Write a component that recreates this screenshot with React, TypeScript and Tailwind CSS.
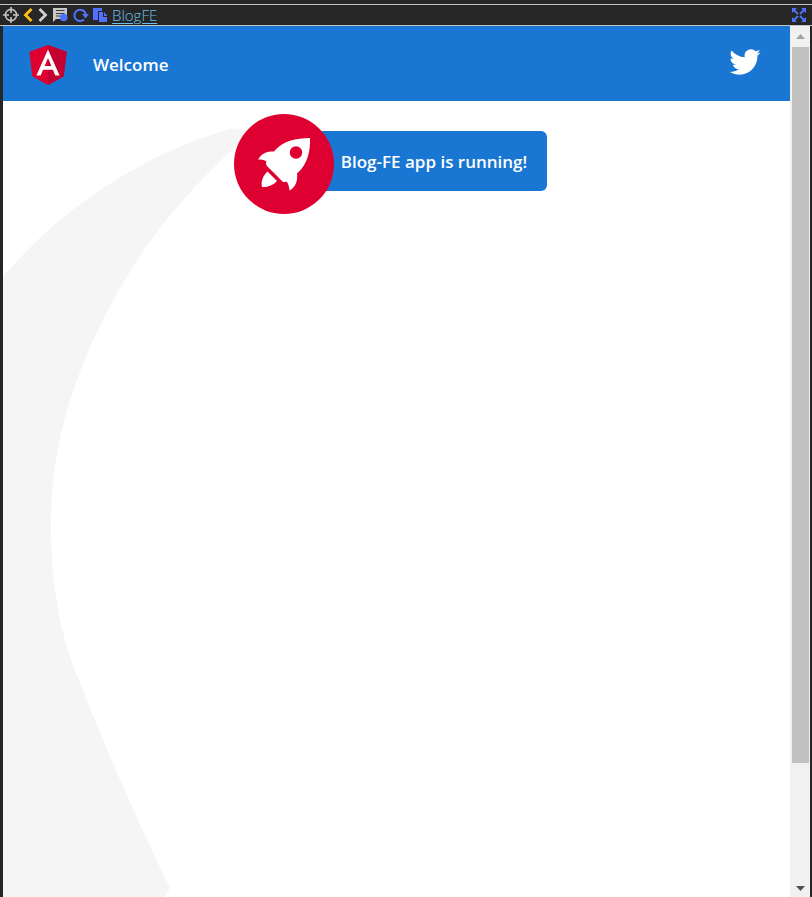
import type { ReactNode } from "react";

function ToolButton({ label, className, children }: { label: string; className: string; children: ReactNode }) {
  return (
    <button type="button" aria-label={label} className={`flex h-4 shrink-0 items-center justify-center ${className}`}>
      {children}
    </button>
  );
}

function BrowserBar() {
  return (
    <div className="mt-1 flex h-[22px] shrink-0 items-center gap-1 border-y border-[#c4c4c4] pr-[5px] pl-[3px]">
      <ToolButton label="Locate" className="w-4 text-[#c4c4c4]">
        <svg viewBox="0 0 16 16" className="size-4" fill="none" stroke="currentColor" strokeWidth="1.6">
          <circle cx="8" cy="8" r="5.6" />
          <path d="M8 0v6M8 10v6M0 8h6M10 8h6" />
        </svg>
      </ToolButton>
      <ToolButton label="Back" className="w-[11px] text-[#ffc20e]">
        <svg viewBox="0 0 11 16" className="h-4 w-[11px]" fill="none" stroke="currentColor" strokeWidth="2.8">
          <path d="M8.500 2L2.500 8l6 6" />
        </svg>
      </ToolButton>
      <ToolButton label="Forward" className="w-[11px] text-[#d0d0d0]">
        <svg viewBox="0 0 11 16" className="h-4 w-[11px]" fill="none" stroke="currentColor" strokeWidth="2.8">
          <path d="M1.500 2l6 6-6 6" />
        </svg>
      </ToolButton>
      <ToolButton label="Comments" className="w-4">
        <svg viewBox="0 0 16 16" className="size-4">
          <path d="M0 1h14v11H3l-3 3z" fill="#c8c8c8" />
          <path d="M3 3.500h8.500M3 6.500h8.500M3 9h5" stroke="#3a3a3a" strokeWidth="1" />
          <circle cx="10.700" cy="10.500" r="3.800" fill="#5271ff" />
        </svg>
      </ToolButton>
      <ToolButton label="Reload" className="w-4 text-[#5271ff]">
        <svg viewBox="0 0 16 16" className="size-4">
          <path d="M11 12.600A5.700 5.700 0 1 1 12.700 7" fill="none" stroke="currentColor" strokeWidth="2" />
          <path d="M9 7h7l-3.500 4.500z" fill="currentColor" />
        </svg>
      </ToolButton>
      <ToolButton label="Copy address" className="w-[15px]">
        <svg viewBox="0 0 15 16" className="h-4 w-[15px]" fill="#5271ff">
          <path d="M0 1h9v3H5v9H0z" />
          <path d="M6 5h4v5h4v5H6z" />
          <path d="M11 5l3.500 4H11z" />
        </svg>
      </ToolButton>
      <a
        href="#blog"
        className="font-['Open_Sans','Noto_Sans',sans-serif] text-[15px] leading-5 font-light text-[#6cc0ee] underline underline-offset-2"
      >
        BlogFE
      </a>
      <ToolButton label="Full screen" className="ml-auto w-4 text-[#5271ff]">
        <svg viewBox="0 0 16 16" className="size-4">
          <path
            d="M1 1h5L1 6zM15 1v5L10 1zM1 15v-5l5 5zM15 15h-5l5-5z"
            fill="currentColor"
          />
          <path d="M3 3l4 4M13 3L9 7M3 13l4-4M13 13L9 9" stroke="currentColor" strokeWidth="1.800" />
        </svg>
      </ToolButton>
    </div>
  );
}

function AngularLogo() {
  return (
    <svg viewBox="0 0 250 250" className="size-[50px]" role="img" aria-label="Angular">
      <path fill="#dd0031" d="M125 30L31.9 63.2l14.2 123.1L125 230l78.9-43.7 14.2-123.1z" />
      <path fill="#c3002f" d="M125 30v200l78.9-43.7 14.2-123.1z" />
      <path
        fill="#fff"
        d="M125 52.1L66.8 182.6h21.7l11.7-29.2h49.4l11.7 29.2H183L125 52.1zm17 83.3h-34l17-40.9 17 40.9z"
      />
    </svg>
  );
}

function TwitterLogo() {
  return (
    <svg viewBox="0 0 400 400" className="size-[50px]" fill="#fff">
      <path d="M153.62,301.59c94.34,0,145.94-78.16,145.94-145.94,0-2.22,0-4.43-.15-6.63A104.36,104.36,0,0,0,325,122.47a102.38,102.38,0,0,1-29.46,8.07,51.47,51.47,0,0,0,22.55-28.37,102.79,102.79,0,0,1-32.57,12.45,51.34,51.34,0,0,0-87.41,46.78A145.62,145.62,0,0,1,92.4,107.81a51.33,51.33,0,0,0,15.88,68.47A50.91,50.91,0,0,1,85,169.86c0,.21,0,.43,0,.65a51.31,51.31,0,0,0,41.15,50.28,51.21,51.21,0,0,1-23.16.88,51.35,51.35,0,0,0,47.92,35.62,102.92,102.92,0,0,1-63.7,22A104.41,104.41,0,0,1,75,278.55a145.21,145.21,0,0,0,78.62,23" />
    </svg>
  );
}

function Rocket() {
  return (
    <svg viewBox="0 0 100 100" className="mt-1.5 size-[100px] shrink-0" aria-hidden="true">
      <circle cx="50" cy="50" r="50" fill="#dd0031" />
      <path
        fill="#fff"
        d="M75.500 24C63 24 48 27 40 37.500C33 37 27.500 39.500 24 45.500C28 45.500 30.500 46 32.500 47.500C31.500 49 32 50.500 33 52L48.500 67.500C49.500 68.300 51 68.300 52.500 67.500C54.500 69.500 55 72.500 55.500 76.500C61.500 73.500 64 66.500 63 59.500C73.500 51 76.500 36 76 24.500Z"
      />
      <circle cx="62" cy="38.500" r="6.200" fill="#dd0031" />
      <path fill="#fff" d="M33.500 57.500L43 67C39 71.500 33 73.500 28 73C26.500 68 29 61.500 33.500 57.500Z" />
    </svg>
  );
}

function Swoosh() {
  return (
    <svg viewBox="3 101 260 796" className="absolute top-0 left-0 h-[796px] w-[260px]" aria-hidden="true">
      <path
        fill="#f5f5f5"
        d="M3 277C62 207 142 155 227 130C234 128 241 128 247 130L247 135L235 147C195 184 161 222 133 267C80 350 50 440 51 527C51 585 60 636 80 683C105 747 138 823 170 888L164 897H3Z"
      />
    </svg>
  );
}

function Scrollbar() {
  return (
    <div className="flex w-5 shrink-0 flex-col bg-[#f1f1f1]" aria-hidden="true">
      <div className="flex h-[21px] shrink-0 items-center justify-center">
        <svg viewBox="0 0 9 5" className="h-[5px] w-[9px]" fill="#a3a3a3">
          <path d="M0 5L4.500 0L9 5z" />
        </svg>
      </div>
      <div className="min-h-0 flex-1 pr-px pl-0.5">
        <div className="h-[86%] bg-[#c1c1c1]" />
      </div>
      <div className="flex h-[17px] shrink-0 items-center justify-center">
        <svg viewBox="0 0 9 5" className="h-[5px] w-[9px]" fill="#505050">
          <path d="M0 0L4.500 5L9 0z" />
        </svg>
      </div>
    </div>
  );
}

export default function App() {
  return (
    <div className="flex h-screen flex-col bg-[#262626] font-['Open_Sans','Noto_Sans',sans-serif]">
      <BrowserBar />
      <div className="flex min-h-0 flex-1 pr-0.5 pl-[3px]">
        <div className="flex min-w-0 flex-1 flex-col bg-white">
          <header className="flex h-[75px] shrink-0 items-center bg-[#1976d2] px-5 text-white">
            <AngularLogo />
            <span className="mt-0.5 ml-5 text-[17px] leading-6 font-semibold">Welcome</span>
            <a href="#twitter" aria-label="Twitter" className="mb-1 ml-auto">
              <TwitterLogo />
            </a>
          </header>
          <main className="relative flex-1 overflow-hidden">
            <Swoosh />
            <div className="relative mt-[30px] flex justify-center">
              <div className="flex h-[60px] items-center rounded-md bg-[#1976d2] pr-5 text-white">
                <div className="-ml-3 flex">
                  <Rocket />
                </div>
                <span className="mt-0.5 ml-[7px] text-[17px] leading-6 font-semibold">Blog-FE app is running!</span>
              </div>
            </div>
          </main>
        </div>
        <Scrollbar />
      </div>
    </div>
  );
}
